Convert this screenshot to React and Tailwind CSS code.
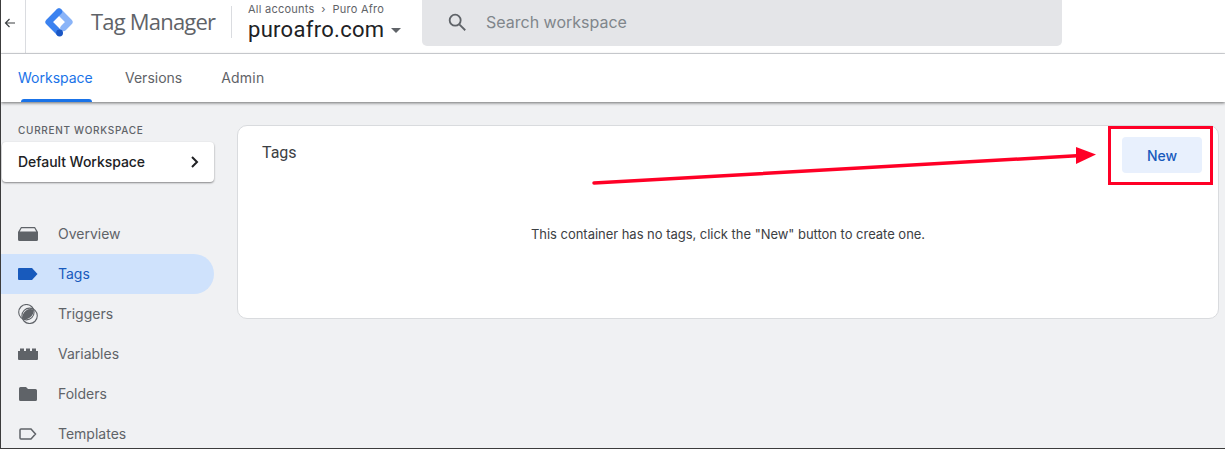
import React from "react";

const Logo = () => (
  <svg width="30" height="30" viewBox="0 0 30 30" className="shrink-0" fill="none" strokeWidth="6.4" strokeLinejoin="round" strokeLinecap="round">
    <path d="M15 4.6 L25.4 15 L19.5 20.9" stroke="#8AB4F8" />
    <path d="M15 4.6 L4.6 15 L15 25.4" stroke="#3B82F0" />
    <circle cx="15.6" cy="26" r="3.4" fill="#1A56C4" stroke="none" />
  </svg>
);

const OverviewIcon = () => (
  <svg width="20" height="16" viewBox="0 0 20 16"><path d="M3 1 H17 L20 6 V13.5 Q20 15 18.5 15 H1.5 Q0 15 0 13.5 V6 Z M3.6 2.2 L1.8 5.4 H18.2 L16.4 2.2 Z" fill="#5f6368" fillRule="evenodd" /></svg>
);
const TagIcon = ({ color }) => (
  <svg width="20" height="12" viewBox="0 0 20 12"><path d="M1 0 H14 L19.5 6 L14 12 H1 Q0 12 0 11 V1 Q0 0 1 0 Z" fill={color} /></svg>
);
const TriggerIcon = () => (
  <svg width="20" height="20" viewBox="0 0 20 20">
    <circle cx="8.4" cy="8.2" r="7.7" fill="none" stroke="#5f6368" strokeWidth="1.1" />
    <circle cx="11.6" cy="11.8" r="7.7" fill="none" stroke="#5f6368" strokeWidth="1.1" />
    <path d="M4.2 14.4 Q4.4 9 8 6.4 Q11.4 4 15.8 5.6 Q15.8 11 12 13.6 Q8.4 16.2 4.2 14.4 Z" fill="#5f6368" />
  </svg>
);
const VariableIcon = () => (
  <svg width="20" height="12" viewBox="0 0 20 12"><path d="M0 3 H2 V0.5 H6 V3 H8 V0.5 H12 V3 H14 V0.5 H18 V3 H20 V11 Q20 12 19 12 H1 Q0 12 0 11 Z" fill="#5f6368" /></svg>
);
const FolderIcon = () => (
  <svg width="18" height="14" viewBox="0 0 18 14"><path d="M1.5 0 H7 L9 2 H16.5 Q18 2 18 3.5 V12.5 Q18 14 16.5 14 H1.5 Q0 14 0 12.5 V1.5 Q0 0 1.5 0 Z" fill="#5f6368" /></svg>
);
const TemplateIcon = () => (
  <svg width="18" height="12" viewBox="0 0 18 12"><path d="M2 1 H12 L16.5 6 L12 11 H2 Q1 11 1 10 V2 Q1 1 2 1 Z" fill="none" stroke="#5f6368" strokeWidth="1.5" /></svg>
);

const nav = [
  ["Overview", <OverviewIcon />],
  ["Tags", <TagIcon color="#185abc" />],
  ["Triggers", <TriggerIcon />],
  ["Variables", <VariableIcon />],
  ["Folders", <FolderIcon />],
  ["Templates", <TemplateIcon />],
];

export default function App() {
  return (
    <div className="relative w-[1225px] h-[449px] overflow-hidden border-l border-b border-[#3c3c3c] bg-[#f0f1f3] flex flex-col font-['Inter','Roboto',sans-serif]">
      <header className="h-[54px] shrink-0 bg-white border-b border-[#dadce0] flex items-start">
        <div className="w-[25px] h-full border-r border-[#dadce0] flex items-center justify-start pl-[3px] pb-[7px] shrink-0">
          <svg width="12" height="12" viewBox="0 0 12 12" fill="none" stroke="#3c4043" strokeWidth="1.2"><path d="M11 6 H1.5 M5.5 2 L1.5 6 L5.5 10" /></svg>
        </div>
        <div className="h-[46px] flex items-center flex-1 min-w-0">
          <div className="ml-[18px] shrink-0 flex items-center mt-[-2px]"><Logo /></div>
          <span className="ml-[17px] mt-[-3px] text-[22px] text-[#5f6368] font-['Open_Sans','Roboto',sans-serif] tracking-[-0.8px] w-[137px] shrink-0 whitespace-nowrap">Tag Manager</span>
          <div className="w-px h-[32px] bg-[#dadce0] shrink-0 ml-[3px] mt-[-2px]" />
          <div className="ml-[16px] w-[174px] shrink-0 flex flex-col mt-[-1px]">
            <span className="text-[11px] leading-[14px] text-[#5f6368] whitespace-nowrap tracking-[0.25px]">All accounts &nbsp;›&nbsp; Puro Afro</span>
            <div className="flex items-center">
              <span className="text-[22px] leading-[28px] text-[#202124] font-['Roboto',sans-serif] tracking-[0.3px]">puroafro.com</span>
              <span className="ml-[7px] mt-[2px] w-0 h-0 border-l-[5px] border-r-[5px] border-t-[5px] border-l-transparent border-r-transparent border-t-[#5f6368]" />
            </div>
          </div>
          <div className="w-[640px] h-full rounded-b-[5px] bg-[#e4e5e8] flex items-center pl-[24px] pb-[3px] shrink-0">
            <svg width="22" height="22" viewBox="0 0 24 24" fill="none" stroke="#5f6368" strokeWidth="2"><circle cx="10" cy="10" r="6" /><path d="M14.5 14.5 L21 21" /></svg>
            <span className="ml-[18px] text-[16px] text-[#80868b]">Search workspace</span>
          </div>
        </div>
      </header>

      <nav className="h-[48px] shrink-0 bg-white flex items-stretch pl-[17px] text-[14px] text-[#5f6368] shadow-[0_1px_3px_rgba(0,0,0,0.55)] z-10">
        <div className="relative w-[74px] flex items-center text-[#1a73e8] pb-[1px]">
          Workspace
          <span className="absolute bottom-0 left-[3px] right-0 h-[3px] rounded-t-[3px] bg-[#1a73e8]" />
        </div>
        <div className="ml-[33px] flex items-center pb-[1px]">Versions</div>
        <div className="ml-[39px] flex items-center pb-[1px] tracking-[0.2px]">Admin</div>
      </nav>

      <div className="flex-1 flex min-h-0">
        <aside className="w-[213px] shrink-0 flex flex-col">
          <div className="mt-[22px] shrink-0 pl-[17px] text-[10px] leading-[12px] tracking-[0.7px] font-medium text-[#5f6368]">CURRENT WORKSPACE</div>
          <div className="mt-[6px] ml-[1px] h-[40px] shrink-0 bg-white rounded-[4px] shadow-[0_1px_2px_rgba(0,0,0,0.45)] flex items-center justify-between pl-[16px] pr-[14px] text-[14px] font-medium text-[#202124] tracking-[-0.05px]">
            <span className="mt-[-1px]">Default Workspace</span>
            <svg width="10" height="14" viewBox="0 0 10 14" fill="none" stroke="#202124" strokeWidth="2"><path d="M2 2 L7 7 L2 12" /></svg>
          </div>
          <div className="mt-[32px] flex flex-col">
            {nav.map(([label, icon]) => (
              <div key={label} className={`h-[40px] shrink-0 flex items-center text-[14px] rounded-r-[20px] ${label === "Tags" ? "bg-[#cfe2fc] text-[#185abc]" : "text-[#5f6368]"}`}>
                <span className="w-[57px] pl-[17px] flex justify-center pr-[20px] shrink-0">{icon}</span>
                <span className="mt-[-1px]">{label}</span>
              </div>
            ))}
          </div>
        </aside>

        <main className="flex-1 pl-[23px] pr-[6px] pt-[23px]">
          <section className="h-[194px] bg-white rounded-[10px] border border-[#d9dbde] flex flex-col">
            <div className="flex justify-between items-start pl-[24px] pr-[16px] pt-[17px]">
              <span className="text-[16px] leading-[20px] text-[#3c4043] font-['Roboto',sans-serif]">Tags</span>
              <button className="w-[80px] h-[36px] mt-[-6px] rounded-[4px] bg-[#e8f0fd] text-[14px] font-medium text-[#185abc]">New</button>
            </div>
            <p className="mt-[52px] text-center text-[13px] leading-[18px] text-[#3c4043] tracking-[-0.03px]">This container has no tags, click the "New" button to create one.</p>
          </section>
        </main>
      </div>

      <div className="absolute left-[1107px] top-[126px] w-[105px] h-[59px] border-[3px] border-[#ff0026] pointer-events-none" />
      <svg className="absolute left-0 top-0 pointer-events-none" width="1225" height="449">
        <line x1="593" y1="183" x2="1080" y2="155.5" stroke="#ff0026" strokeWidth="3.5" strokeLinecap="round" />
        <polygon points="1075,147 1095,154.5 1075,164" fill="#ff0026" />
      </svg>
    </div>
  );
}
